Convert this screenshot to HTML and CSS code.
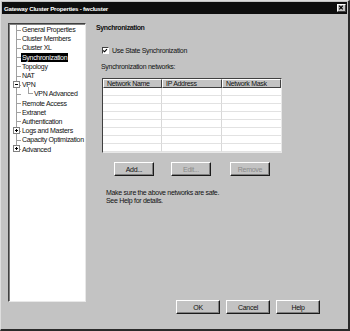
FILE: index.html
```html
<!DOCTYPE html>
<html lang="en">
<head>
    <meta charset="UTF-8">
    <title>Gateway Cluster Properties - fwcluster</title>
    <link rel="stylesheet" href="styles.css">
</head>
<body>
    <div class="window">
        <div class="titlebar">
            <span class="title">Gateway Cluster Properties - fwcluster</span>
            <span class="close">
                <svg width="9" height="8" viewBox="0 0 9 8"><path d="M2.5 1.5 L6.5 5.5 M6.5 1.5 L2.5 5.5" stroke="#000" stroke-width="1.3"/></svg>
            </span>
        </div>

        <div class="main">
            <!-- arbre de navigation -->
            <div class="tree">
                <div class="row"><span class="label">General Properties</span></div>
                <div class="row"><span class="label">Cluster Members</span></div>
                <div class="row"><span class="label">Cluster XL</span></div>
                <div class="row"><span class="label selected">Synchronization</span></div>
                <div class="row"><span class="label">Topology</span></div>
                <div class="row"><span class="label">NAT</span></div>
                <div class="row has-toggle">
                    <span class="toggle"><svg width="7" height="7" viewBox="0 0 7 7"><rect x="0.5" y="0.5" width="6" height="6" fill="#fff" stroke="#808080"/><path d="M2 3.5 H5" stroke="#000"/></svg></span>
                    <span class="label">VPN</span>
                    <span class="branch"></span>
                </div>
                <div class="row sub"><span class="elbow"></span><span class="label">VPN Advanced</span></div>
                <div class="row"><span class="label">Remote Access</span></div>
                <div class="row"><span class="label">Extranet</span></div>
                <div class="row"><span class="label">Authentication</span></div>
                <div class="row has-toggle">
                    <span class="toggle"><svg width="7" height="7" viewBox="0 0 7 7"><rect x="0.5" y="0.5" width="6" height="6" fill="#fff" stroke="#808080"/><path d="M2 3.5 H5 M3.5 2 V5" stroke="#000"/></svg></span>
                    <span class="label">Logs and Masters</span>
                </div>
                <div class="row"><span class="label">Capacity Optimization</span></div>
                <div class="row has-toggle last">
                    <span class="toggle"><svg width="7" height="7" viewBox="0 0 7 7"><rect x="0.5" y="0.5" width="6" height="6" fill="#fff" stroke="#808080"/><path d="M2 3.5 H5 M3.5 2 V5" stroke="#000"/></svg></span>
                    <span class="label">Advanced</span>
                </div>
            </div>

            <div class="pane">
                <div class="heading">Synchronization</div>

                <label class="check">
                    <span class="box"><svg width="7" height="7" viewBox="0 0 7 7"><path d="M1.5 3.5 L3 5 L5.8 1.8" fill="none" stroke="#000" stroke-width="1.3"/></svg></span>
                    Use State Synchronization
                </label>

                <div class="caption">Synchronization networks:</div>

                <div class="grid">
                    <div class="grid-head">
                        <span>Network Name</span>
                        <span>IP Address</span>
                        <span>Network Mask</span>
                    </div>
                    <div class="grid-row"><span></span><span></span><span></span></div>
                    <div class="grid-row"><span></span><span></span><span></span></div>
                    <div class="grid-row"><span></span><span></span><span></span></div>
                    <div class="grid-row"><span></span><span></span><span></span></div>
                    <div class="grid-row"><span></span><span></span><span></span></div>
                    <div class="grid-row"><span></span><span></span><span></span></div>
                    <div class="grid-row"><span></span><span></span><span></span></div>
                    <div class="grid-row"><span></span><span></span><span></span></div>
                </div>

                <div class="actions">
                    <button class="btn">Add...</button>
                    <button class="btn disabled">Edit...</button>
                    <button class="btn disabled">Remove</button>
                </div>

                <p class="note">Make sure the above networks are safe.<br>See Help for details.</p>

                <div class="footer">
                    <button class="btn big">OK</button>
                    <button class="btn big">Cancel</button>
                    <button class="btn big">Help</button>
                </div>
            </div>
        </div>
    </div>
</body>
</html>
```

FILE: styles.css
```css
* {
    box-sizing: border-box;
}

body {
    margin: 0;
    font-family: 'Liberation Sans', Arial, sans-serif;
    font-size: 7px;
    letter-spacing: -0.3px;
    color: #111;
    background: #c3c3c3;
}

.window {
    width: 350px;
    height: 331px;
    display: flex;
    flex-direction: column;
    background: #c3c3c3;
    border-top: 1px solid #dedede;
    border-left: 1px solid #dedede;
    border-right: 2px solid #2a2a2a;
    border-bottom: 2px solid #2a2a2a;
}

.titlebar {
    margin: 1px 1px 0 1px;
    height: 12px;
    background: #0e0e0e;
    color: #fff;
    font-weight: bold;
    font-size: 6.2px;
    letter-spacing: -0.25px;
    display: flex;
    align-items: center;
    justify-content: space-between;
    padding: 0 1px 0 2px;
}

.close {
    width: 9px;
    height: 8px;
    background: #c3c3c3;
    border: 1px solid;
    border-color: #fff #404040 #404040 #fff;
    display: flex;
}
.close svg {
    margin: -1px 0 0 -1px;
}

.main {
    flex: 1;
    display: flex;
    align-items: stretch;
    padding: 9px 0 15px 7px;
}

/* arbre */
.tree {
    width: 78px;
    height: 279px;
    background: #fff;
    border: 1px solid;
    border-color: #404040 #e8e8e8 #e8e8e8 #404040;
    box-shadow: inset 1px 1px 0 #808080;
    padding: 1px 0 0 1px;
}
.row {
    position: relative;
    height: 9.2px;
    display: flex;
    align-items: center;
    padding-left: 11px;
    white-space: nowrap;
}
.row::before {
    content: "";
    position: absolute;
    left: 6px;
    top: 0;
    bottom: 0;
    border-left: 1px solid #a0a0a0;
}
.row.last::before {
    bottom: 50%;
}
.row::after {
    content: "";
    position: absolute;
    left: 6px;
    width: 5px;
    top: 50%;
    border-top: 1px solid #a0a0a0;
}
.toggle {
    position: absolute;
    left: 3px;
    top: 1px;
    z-index: 1;
    display: flex;
}
.branch {
    position: absolute;
    left: 18px;
    top: 70%;
    bottom: -2px;
    border-left: 1px solid #a0a0a0;
}
.row.sub {
    padding-left: 23px;
}
.elbow {
    position: absolute;
    left: 18px;
    top: 0;
    height: 50%;
    width: 5px;
    border-left: 1px solid #a0a0a0;
    border-bottom: 1px solid #a0a0a0;
}
.label {
    padding: 0 1px;
    line-height: 9px;
}
.label.selected {
    background: #000;
    color: #fff;
}

/* panneau droit */
.pane {
    flex: 1;
    display: flex;
    flex-direction: column;
    margin-left: 10px;
    padding-right: 28px;
}
.heading {
    font-weight: bold;
    line-height: 9px;
    letter-spacing: -0.4px;
}
.check {
    display: flex;
    align-items: center;
    gap: 3px;
    margin: 14px 0 0 6px;
    line-height: 9px;
}
.box {
    width: 7px;
    height: 7px;
    background: #fff;
    border: 1px solid;
    border-color: #404040 #fff #fff #404040;
    display: flex;
}
.box svg {
    margin: -1px 0 0 -1px;
}
.caption {
    margin: 7px 0 0 5px;
    line-height: 9px;
}

.grid {
    margin: 7px 0 0 6px;
    width: 180px;
    background: #fff;
    border: 1px solid;
    border-color: #404040 #e8e8e8 #e8e8e8 #404040;
}
.grid-head,
.grid-row {
    display: grid;
    grid-template-columns: 59px 60px 59px;
}
.grid-head span {
    height: 9px;
    line-height: 8px;
    padding-left: 3px;
    background: #c3c3c3;
    border: 1px solid;
    border-color: #fff #404040 #404040 #fff;
    overflow: hidden;
    white-space: nowrap;
}
.grid-row span {
    height: 8px;
    border-right: 1px solid #d8d8d8;
    border-bottom: 1px solid #e2e2e2;
}
.grid-row span:last-child {
    border-right: none;
}

.actions {
    display: flex;
    margin: 9px 0 0 18px;
    gap: 17px;
}
.btn {
    font-family: inherit;
    font-size: 7px;
    letter-spacing: -0.3px;
    width: 40px;
    height: 14px;
    padding: 0;
    background: #c3c3c3;
    color: #111;
    border: 1px solid;
    border-color: #fff #1a1a1a #1a1a1a #fff;
    box-shadow: inset -1px -1px 0 #808080;
}
.actions .btn + .btn + .btn {
    margin-left: 2px;
}
.btn.disabled {
    color: #8a8a8a;
}
.note {
    margin: 13px 0 0 10px;
    line-height: 8px;
}
.footer {
    margin-top: auto;
    display: flex;
    justify-content: flex-end;
    gap: 6px;
}
.btn.big {
    width: 44px;
    height: 14px;
}
```
